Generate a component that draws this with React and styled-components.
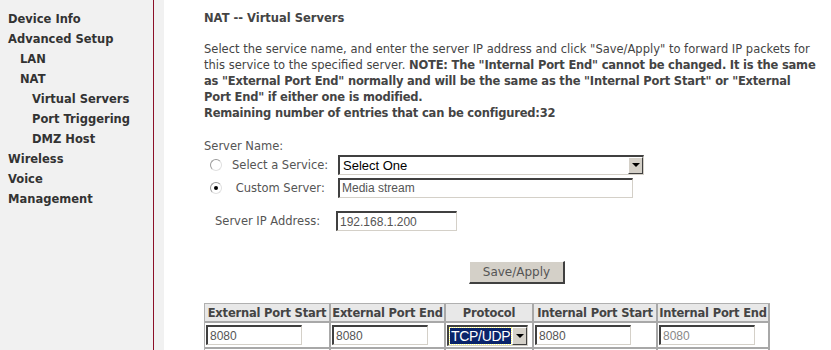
import React from 'react';
import styled, { createGlobalStyle } from 'styled-components';

const GlobalStyle = createGlobalStyle`
    html, body {
        margin: 0;
        padding: 0;
        background: #ffffff;
    }
    body {
        font-family: "DejaVu Sans", Tahoma, sans-serif;
        color: #333333;
    }
`;

const menu = [
    { label: 'Device Info', level: 0 },
    { label: 'Advanced Setup', level: 0 },
    { label: 'LAN', level: 1 },
    { label: 'NAT', level: 1 },
    { label: 'Virtual Servers', level: 2 },
    { label: 'Port Triggering', level: 2 },
    { label: 'DMZ Host', level: 2 },
    { label: 'Wireless', level: 0 },
    { label: 'Voice', level: 0 },
    { label: 'Management', level: 0 },
];

const columns = [
    { title: 'External Port Start', width: 126 },
    { title: 'External Port End', width: 115 },
    { title: 'Protocol', width: 88 },
    { title: 'Internal Port Start', width: 124 },
    { title: 'Internal Port End', width: 112 },
];

const App = () => {
    return (
        <>
            <GlobalStyle />
            <Page>
                <Sidebar>
                    <Menu>
                        {menu.map((item) => (
                            <MenuItem key={item.label} level={item.level}>
                                {item.label}
                            </MenuItem>
                        ))}
                    </Menu>
                </Sidebar>
                <FrameGap />
                <Main>
                    <Title>NAT -- Virtual Servers</Title>
                    <Intro>
                        Select the service name, and enter the server IP address and click
                        "Save/Apply" to forward IP packets for
                        <br />
                        this service to the specified server. <b>NOTE: The "Internal Port End"
                        cannot be changed. It is the same</b>
                        <br />
                        <b>as "External Port End" normally and will be the same as the "Internal
                        Port Start" or "External</b>
                        <br />
                        <b>Port End" if either one is modified.</b>
                        <br />
                        <b>Remaining number of entries that can be configured:32</b>
                    </Intro>

                    <Label>Server Name:</Label>
                    <RadioRow>
                        <Radio />
                        <RadioLabel width={106}>Select a Service:</RadioLabel>
                        <SelectBox width={306}>
                            <SelectText>Select One</SelectText>
                            <ArrowButton>
                                <Arrow />
                            </ArrowButton>
                        </SelectBox>
                    </RadioRow>
                    <RadioRow>
                        <Radio checked />
                        <RadioLabel width={106}>&nbsp;Custom Server:</RadioLabel>
                        <TextInput width={295} defaultValue="Media stream" readOnly />
                    </RadioRow>

                    <IpRow>
                        <IpLabel>Server IP Address:</IpLabel>
                        <TextInput width={121} defaultValue="192.168.1.200" readOnly />
                    </IpRow>

                    <ButtonRow>
                        <Button>Save/Apply</Button>
                    </ButtonRow>

                    <Table>
                        <thead>
                            <tr>
                                {columns.map((c) => (
                                    <Th key={c.title} style={{ width: c.width }}>
                                        {c.title}
                                    </Th>
                                ))}
                            </tr>
                        </thead>
                        <tbody>
                            {[0, 1].map((row) => (
                                <tr key={row}>
                                    <Td>
                                        <CellInput defaultValue={row === 0 ? '8080' : ''} readOnly />
                                    </Td>
                                    <Td>
                                        <CellInput defaultValue={row === 0 ? '8080' : ''} readOnly />
                                    </Td>
                                    <Td>
                                        <SelectBox width={81} small>
                                            <SelectText small selected={row === 0}>
                                                TCP/UDP
                                            </SelectText>
                                            <ArrowButton>
                                                <Arrow />
                                            </ArrowButton>
                                        </SelectBox>
                                    </Td>
                                    <Td>
                                        <CellInput defaultValue={row === 0 ? '8080' : ''} readOnly />
                                    </Td>
                                    <Td>
                                        <CellInput defaultValue={row === 0 ? '8080' : ''} readOnly muted />
                                    </Td>
                                </tr>
                            ))}
                        </tbody>
                    </Table>
                </Main>
            </Page>
        </>
    );
};

export default App;

const Page = styled.div`
    display: flex;
    height: 350px;
    overflow: hidden;
`;

const Sidebar = styled.div`
    width: 153px;
    flex: none;
    background: #f1f1f1;
    border-right: 1px solid #8c1028;
`;

const FrameGap = styled.div`
    width: 10px;
    flex: none;
    background: #f1f1f1;
`;

const Menu = styled.div`
    display: flex;
    flex-direction: column;
    padding-top: 9px;
`;

const MenuItem = styled.div`
    height: 20px;
    line-height: 20px;
    padding-left: ${(props) => 8 + props.level * 12}px;
    font-size: 11.5px;
    font-weight: bold;
    color: #333333;
    white-space: nowrap;
`;

const Main = styled.div`
    flex: 1;
    padding: 9px 0 0 40px;
    font-size: 11.5px;
    color: #444444;
`;

const Title = styled.div`
    height: 18px;
    line-height: 18px;
    font-weight: bold;
    color: #444444;
`;

const Intro = styled.p`
    margin: 14px 0 0 0;
    width: 640px;
    line-height: 16px;
    white-space: nowrap;
    color: #444444;

    b {
        letter-spacing: -0.2px;
    }
`;

const Label = styled.div`
    margin-top: 18px;
    line-height: 14px;
    color: #555555;
`;

const RadioRow = styled.div`
    display: flex;
    align-items: center;
    height: 23px;
    padding-left: 6px;
    color: #555555;
`;

const Radio = styled.span`
    position: relative;
    width: 10px;
    height: 10px;
    flex: none;
    border-radius: 50%;
    border: 1px solid #9a9a9a;
    border-bottom-color: #e0e0e0;
    border-right-color: #e0e0e0;
    background: #ffffff;
    margin-right: 10px;

    &::after {
        content: '';
        display: ${(props) => (props.checked ? 'block' : 'none')};
        position: absolute;
        left: 3px;
        top: 3px;
        width: 4px;
        height: 4px;
        border-radius: 50%;
        background: #000000;
    }
`;

const RadioLabel = styled.span`
    width: ${(props) => props.width}px;
    flex: none;
    white-space: nowrap;
`;

const SelectBox = styled.div`
    display: flex;
    align-items: stretch;
    box-sizing: border-box;
    width: ${(props) => props.width}px;
    height: ${(props) => (props.small ? 21 : 20)}px;
    border-style: solid;
    border-width: 2px 1px 1px 2px;
    border-color: #404040 #d4d0c8 #d4d0c8 #404040;
    background: #ffffff;
`;

const SelectText = styled.span`
    flex: 1;
    display: flex;
    align-items: center;
    padding: 0 ${(props) => (props.small ? 1 : 2)}px;
    margin: 1px;
    font-family: "Liberation Sans", Arial, sans-serif;
    font-size: ${(props) => (props.small ? 14 : 13)}px;
    letter-spacing: ${(props) => (props.small ? '-0.3px' : '0')};
    color: ${(props) => (props.selected ? '#ffffff' : '#000000')};
    background: ${(props) => (props.selected ? '#0a246a' : 'transparent')};
    outline: ${(props) => (props.selected ? '1px dotted #ffff80' : 'none')};
    white-space: nowrap;
    overflow: hidden;
`;

const ArrowButton = styled.span`
    width: 15px;
    flex: none;
    display: flex;
    align-items: center;
    justify-content: center;
    box-sizing: border-box;
    background: #d4d0c8;
    border-style: solid;
    border-width: 1px;
    border-color: #ffffff #404040 #404040 #ffffff;
`;

const Arrow = styled.span`
    width: 0;
    height: 0;
    border-left: 4px solid transparent;
    border-right: 4px solid transparent;
    border-top: 4px solid #000000;
`;

const TextInput = styled.input`
    box-sizing: border-box;
    width: ${(props) => props.width}px;
    height: 20px;
    padding: 0 2px;
    border-style: solid;
    border-width: 2px 1px 1px 2px;
    border-color: #404040 #d4d0c8 #d4d0c8 #404040;
    font-family: "Liberation Sans", Arial, sans-serif;
    font-size: 12px;
    color: #555555;
    background: #ffffff;
    outline: none;
`;

const IpRow = styled.div`
    display: flex;
    align-items: center;
    margin-top: 12px;
    padding-left: 11px;
    color: #555555;
`;

const IpLabel = styled.span`
    width: 121px;
    flex: none;
    white-space: nowrap;
`;

const ButtonRow = styled.div`
    display: flex;
    padding-left: 265px;
    margin-top: 30px;
`;

const Button = styled.button`
    box-sizing: border-box;
    width: 96px;
    height: 23px;
    background: #d4d0c8;
    border-style: solid;
    border-width: 1px 2px 2px 1px;
    border-color: #ffffff #404040 #404040 #ffffff;
    font-family: "DejaVu Sans", Tahoma, sans-serif;
    font-size: 12px;
    color: #555555;
    padding: 0;
`;

const Table = styled.table`
    margin-top: 19px;
    border-collapse: separate;
    border-spacing: 0;
    table-layout: fixed;
    border-top: 1px solid #b0b0b0;
    border-left: 1px solid #b0b0b0;
`;

const Th = styled.th`
    box-sizing: border-box;
    height: 19px;
    padding: 0;
    background: #e8e8e8;
    border-right: 2px solid #a8a8a8;
    border-bottom: 2px solid #a8a8a8;
    font-size: 11.5px;
    font-weight: bold;
    letter-spacing: -0.2px;
    color: #444444;
    white-space: nowrap;
    overflow: hidden;
    text-align: center;
`;

const Td = styled.td`
    padding: 1px;
    height: 22px;
    border-right: 2px solid #a8a8a8;
    border-bottom: 2px solid #a8a8a8;
    vertical-align: middle;
`;

const CellInput = styled(TextInput).attrs({ width: 96 })`
    color: ${(props) => (props.muted ? '#888888' : '#555555')};
`;
